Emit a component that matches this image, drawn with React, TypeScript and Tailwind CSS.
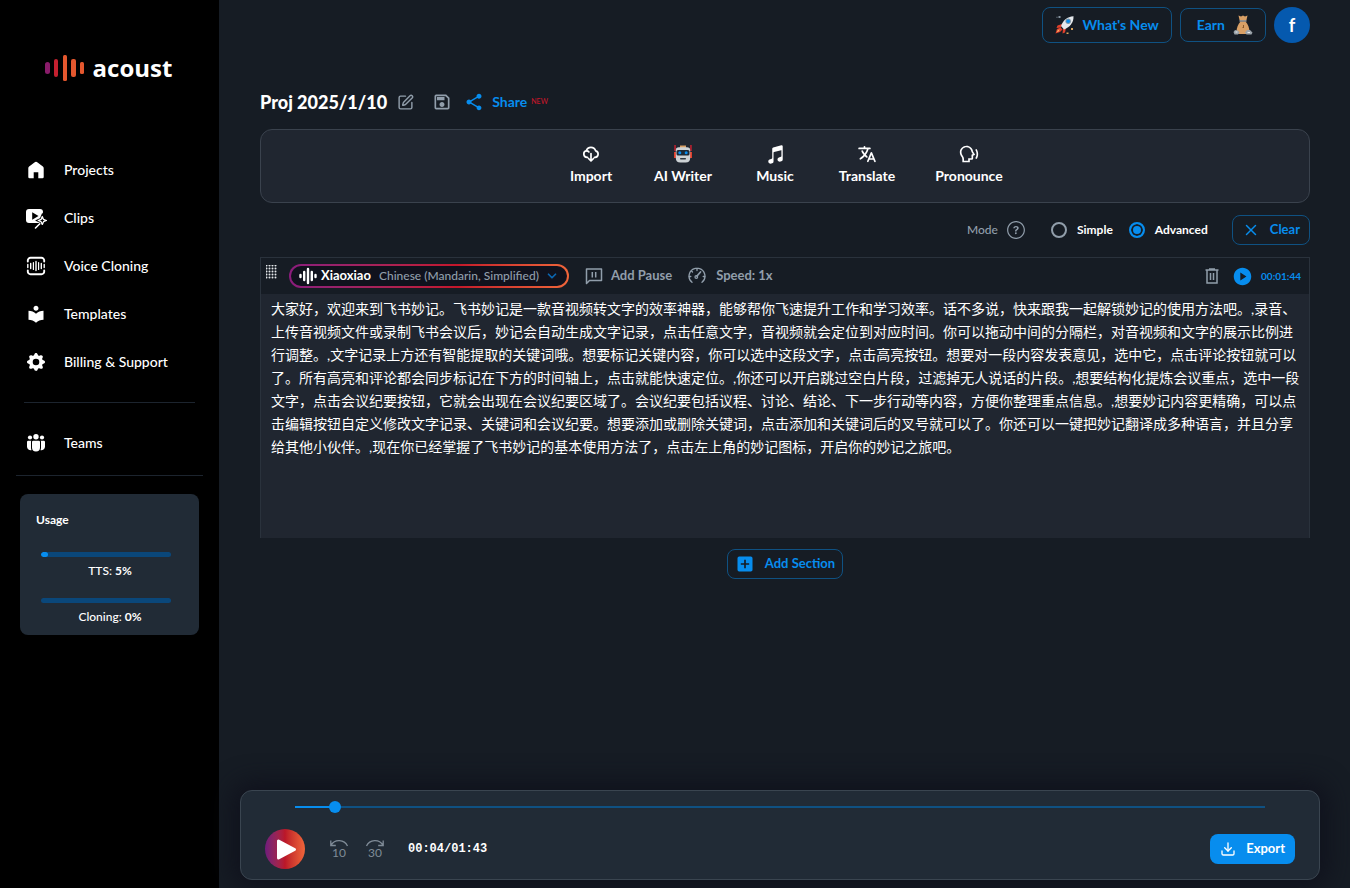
import { useState } from "react";
import type { ReactNode } from "react";
import { ChevronDown, Download, SquarePen, X } from "lucide-react";
import { BsGearFill } from "react-icons/bs";
import { IoIosHelpCircleOutline } from "react-icons/io";
import { IoLanguage, IoMusicalNotes } from "react-icons/io5";
import { MdAddBox, MdLocalLibrary, MdOutlineSave, MdPlayCircle, MdShare } from "react-icons/md";
import { RiSpeakLine } from "react-icons/ri";

const SCRIPT =
  "大家好，欢迎来到飞书妙记。飞书妙记是一款音视频转文字的效率神器，能够帮你飞速提升工作和学习效率。话不多说，快来跟我一起解锁妙记的使用方法吧。,录音、上传音视频文件或录制飞书会议后，妙记会自动生成文字记录，点击任意文字，音视频就会定位到对应时间。你可以拖动中间的分隔栏，对音视频和文字的展示比例进行调整。,文字记录上方还有智能提取的关键词哦。想要标记关键内容，你可以选中这段文字，点击高亮按钮。想要对一段内容发表意见，选中它，点击评论按钮就可以了。所有高亮和评论都会同步标记在下方的时间轴上，点击就能快速定位。,你还可以开启跳过空白片段，过滤掉无人说话的片段。,想要结构化提炼会议重点，选中一段文字，点击会议纪要按钮，它就会出现在会议纪要区域了。会议纪要包括议程、讨论、结论、下一步行动等内容，方便你整理重点信息。,想要妙记内容更精确，可以点击编辑按钮自定义修改文字记录、关键词和会议纪要。想要添加或删除关键词，点击添加和关键词后的叉号就可以了。你还可以一键把妙记翻译成多种语言，并且分享给其他小伙伴。,现在你已经掌握了飞书妙记的基本使用方法了，点击左上角的妙记图标，开启你的妙记之旅吧。";

/* ---------- icons ---------- */

function LogoMark() {
  return (
    <svg width="40" height="28" viewBox="0 0 40 28" aria-hidden="true">
      <rect x="0" y="8" width="5" height="12" rx="2.5" fill="#8a1c6a" />
      <rect x="9" y="5" width="4" height="18" rx="2" fill="#c4202f" />
      <rect x="18" y="1" width="4" height="26" rx="1.5" fill="#e4572e" />
      <rect x="26" y="5" width="5" height="18" rx="2" fill="#e4572e" />
      <rect x="35" y="8" width="4" height="12" rx="1.5" fill="#e4572e" />
    </svg>
  );
}

function HomeIcon() {
  return (
    <svg width="24" height="24" viewBox="0 0 24 24" fill="currentColor" aria-hidden="true">
      <path d="M11.1 4.1a1.5 1.5 0 0 1 1.8 0l6 4.5a2 2 0 0 1 .8 1.6V19a1.3 1.3 0 0 1-1.3 1.3h-4.1v-6.1H9.7v6.1H5.6A1.3 1.3 0 0 1 4.3 19v-8.8a2 2 0 0 1 .8-1.6z" />
    </svg>
  );
}

function ClipsIcon() {
  return (
    <svg width="24" height="24" viewBox="0 0 24 24" aria-hidden="true">
      <rect x="2" y="3" width="17" height="14" rx="3" fill="currentColor" />
      <path d="M8.2 6.2v7.6l6.3-3.8z" fill="#000" />
      <path
        d="M18.3 9.2l1.4 3.6 3.3 1.7-3.3 1.5-1.4 3.3-1.5-3.3-3.4-1.5 3.4-1.7z"
        fill="#000"
        stroke="#000"
        strokeWidth="2"
      />
      <path
        d="M18.3 10.5l1.2 2.9 2.9 1.1-2.9 1.2-1.2 2.7-1.2-2.7-2.9-1.2 2.9-1.1z"
        fill="#000"
        stroke="currentColor"
        strokeWidth="1.3"
        strokeLinejoin="round"
      />
      <path d="M15.8 17.8 11.5 22" stroke="currentColor" strokeWidth="1.6" strokeLinecap="round" />
    </svg>
  );
}

function VoiceCloneIcon() {
  return (
    <svg
      width="24"
      height="24"
      viewBox="0 0 24 24"
      fill="none"
      stroke="currentColor"
      strokeWidth="1.9"
      strokeLinecap="round"
      aria-hidden="true"
    >
      <path d="M3.8 7.5v-1a2.7 2.7 0 0 1 2.7-2.7h11a2.7 2.7 0 0 1 2.7 2.7v1M20.2 16.5v1a2.7 2.7 0 0 1-2.7 2.7h-11a2.7 2.7 0 0 1-2.7-2.7v-1" />
      <path d="M3.8 10.5v3M6.7 9.5v5M12 7.5v9M17.3 9.5v5M20.2 10.5v3" strokeWidth="1.4" />
      <path d="M9.4 8.5v7M14.6 8.5v7" strokeWidth="1.2" />
    </svg>
  );
}

function TeamsIcon() {
  return (
    <svg width="24" height="24" viewBox="0 0 24 24" fill="currentColor" aria-hidden="true">
      <circle cx="12" cy="5.7" r="2.7" />
      <circle cx="6" cy="6.5" r="2.1" />
      <circle cx="18" cy="6.5" r="2.1" />
      <path d="M8 11a1.2 1.2 0 0 1 1.2-1.2h5.6A1.2 1.2 0 0 1 16 11v5.6a4 4 0 0 1-8 0z" />
      <path d="M7.4 9.8H4.2A1.2 1.2 0 0 0 3 11v4.8a3.6 3.6 0 0 0 4.5 3.4 6 6 0 0 1-.5-2.6V11c0-.5.1-.9.4-1.2zM16.6 9.8h3.2A1.2 1.2 0 0 1 21 11v4.8a3.6 3.6 0 0 1-4.5 3.4 6 6 0 0 0 .5-2.6V11c0-.5-.1-.9-.4-1.2z" />
    </svg>
  );
}

function RocketIcon() {
  return (
    <svg width="20" height="20" viewBox="0 0 20 20" aria-hidden="true">
      <path d="M7 9 2.5 10.5 1.5 13 6 12.5zM11 13l-1 4.5-2.5 1 .5-4.5z" fill="#e0402c" />
      <path d="M6 11C8 5.5 12 1.5 18.5 1.2 18.8 7.5 15 12 9 14.5z" fill="#e4e8ec" />
      <circle cx="13.2" cy="6.3" r="2.7" fill="#7d93a5" />
      <circle cx="13.2" cy="6.3" r="1.8" fill="#078dee" />
      <path d="M5.5 12.5 2 14 .5 18.5 5 17l2.500-2.500z" fill="#e0402c" />
      <path d="M4.5 14 2.5 15.5l-.7 1.8L4 16.3z" fill="#f5b36b" />
      <path d="M3.5 1h2v2h-2zM1.500 1.8h1v1h-1z" fill="#8795a1" />
      <path d="M16 13h2v2h-2zM11.5 17.5h2V19h-2z" fill="#d8a25c" />
    </svg>
  );
}

function MoneyBagIcon() {
  return (
    <svg width="20" height="20" viewBox="0 0 20 20" aria-hidden="true">
      <path d="M5.5.5 8 1.5l2-1 2 1 2.5-1-1 4.5h-7z" fill="#d9a066" />
      <path d="M7.5 6.5h5c2.5 3 4 6.500 4 10 0 1.500-1 2.500-2.500 2.500H6c-1.500 0-2.500-1-2.500-2.500 0-3.500 1.500-7 4-10z" fill="#d9a066" />
      <path d="M6.5 5h7v1.8h-7z" fill="#8f8f8f" />
      <path d="M10.5 10v2M9.5 12.5H11" stroke="#8a5a2b" />
      <path d="M.5 17 2 15l3 .5 1.5 2-1.5 2H1.500zM12 17.5l2-2.5h3l2.5 2.500-1 2h-5z" fill="#9ba3aa" />
      <path d="M2.5 17h2M14.5 17.5H17" stroke="#e8ecef" />
    </svg>
  );
}

function RobotIcon() {
  return (
    <svg width="18" height="18" viewBox="0 0 18 18" aria-hidden="true">
      <path d="M.3 0h1.5v6H.3zM16.2 0h1.5v6h-1.5z" fill="#c4202f" />
      <path d="M0 7h2.5v6H0zM15.5 7H18v6h-2.5z" fill="#e0402c" />
      <path d="M6 .5h6V3H6z" fill="#d9a066" />
      <path d="M5 2.2h8a3.2 3.2 0 0 1 3.2 3.3V13c0 3-1.7 4.5-4.5 4.5H6.300c-2.800 0-4.500-1.500-4.500-4.500V5.500A3.200 3.200 0 0 1 5 2.200z" fill="#cdd2d5" />
      <rect x="2.5" y="5" width="13" height="5.5" rx="1.5" fill="#1d2a36" />
      <circle cx="5.8" cy="7.7" r="1.5" fill="#078dee" />
      <circle cx="12.2" cy="7.7" r="1.5" fill="#078dee" />
      <rect x="6" y="13" width="6" height="1.5" rx=".7" fill="#2e3942" />
    </svg>
  );
}

function CloudImportIcon() {
  return (
    <svg
      width="18"
      height="18"
      viewBox="0 0 18 18"
      fill="none"
      stroke="currentColor"
      strokeWidth="1.7"
      strokeLinecap="round"
      strokeLinejoin="round"
      aria-hidden="true"
    >
      <path d="M5.5 12.3H5A3.3 3.3 0 0 1 4.3 5.8a4.9 4.9 0 0 1 9.3 0 3.3 3.3 0 0 1-.6 6.5h-.5" />
      <path d="M4.5 5.8c1 0 1.9.4 2.4 1.1M9 8.5v7.3M6.5 13.5 9 16l2.5-2.5" />
    </svg>
  );
}

function WaveIcon() {
  return (
    <svg
      width="18"
      height="18"
      viewBox="0 0 18 18"
      stroke="currentColor"
      strokeWidth="2.4"
      strokeLinecap="round"
      aria-hidden="true"
    >
      <path d="M1.5 8v2M5.2 5v8M9 2v14M12.8 5v8M16.5 8v2" />
    </svg>
  );
}

function PauseCommentIcon() {
  return (
    <svg
      width="18"
      height="18"
      viewBox="0 0 18 18"
      fill="none"
      stroke="currentColor"
      strokeWidth="1.5"
      aria-hidden="true"
    >
      <path d="M1.5 16.5V2h15v11.5h-12z" strokeLinejoin="round" />
      <path d="M7.3 5v5.5M10.7 5v5.5" />
    </svg>
  );
}

function SpeedIcon() {
  return (
    <svg
      width="18"
      height="18"
      viewBox="0 0 18 18"
      fill="none"
      stroke="currentColor"
      strokeWidth="1.3"
      strokeLinecap="round"
      aria-hidden="true"
    >
      <path d="M4 15.300A8 8 0 0 1 7.300 1.300h3.400A8 8 0 0 1 14 15.300" />
      <path d="M9 1.500v2M3.500 4l1 1M1.300 9.500h1.500M15.200 9.500h1.500" />
      <path d="M9 9 12.500 5" strokeWidth="1.8" />
      <circle cx="8.300" cy="10" r="1.300" />
    </svg>
  );
}

function TrashIcon() {
  return (
    <svg
      width="16"
      height="18"
      viewBox="0 0 16 18"
      fill="none"
      stroke="currentColor"
      strokeWidth="1.5"
      aria-hidden="true"
    >
      <path d="M1.5 3h13M5 2h6M3 3v13h10V3M6.5 6v7M9.5 6v7" />
    </svg>
  );
}

function DragDots() {
  const rows = [1, 4, 7, 10, 13];
  const cols = [1, 4, 7, 10];
  return (
    <svg width="11" height="14" viewBox="0 0 11 14" fill="#e5e8eb" aria-hidden="true">
      {rows.map((y) => cols.map((x) => <circle key={`${x}-${y}`} cx={x - 0.5} cy={y - 0.5} r="1" />))}
    </svg>
  );
}

function SkipIcon({ seconds, forward }: { seconds: number; forward?: boolean }) {
  return (
    <svg
      width="20"
      height="20"
      viewBox="0 0 20 20"
      fill="none"
      stroke="currentColor"
      strokeWidth="1.3"
      aria-hidden="true"
    >
      {forward ? (
        <path d="M1.5 7A9.3 9.3 0 0 1 18 6.200M18.200 1.500v5h-5" />
      ) : (
        <path d="M18.500 7A9.300 9.300 0 0 0 2 6.200M1.800 1.500v5h5" />
      )}
      <text x="10" y="18" textAnchor="middle" fontSize="12" fill="currentColor" stroke="none">
        {seconds}
      </text>
    </svg>
  );
}

/* ---------- sidebar ---------- */

function NavItem({ icon, label }: { icon: ReactNode; label: string }) {
  return (
    <a href="#" className="flex h-12 items-center gap-4 px-6 text-sm font-medium text-white">
      <span className="flex w-6 justify-center">{icon}</span>
      {label}
    </a>
  );
}

function UsageBar({ label, value }: { label: string; value: number }) {
  return (
    <div>
      <div
        role="progressbar"
        aria-label={label}
        aria-valuenow={value}
        className="h-[5px] overflow-hidden rounded-sm bg-[#0a477a]"
      >
        <div className="h-full rounded-sm bg-[#078dee]" style={{ width: `${value}%` }} />
      </div>
      <p className="mt-1 pl-2 text-center text-xs leading-5 font-medium">
        {label}: <b>{value}%</b>
      </p>
    </div>
  );
}

function Sidebar() {
  return (
    <aside className="w-[219px] shrink-0 bg-black text-white">
      <a href="#" className="mt-[54px] flex h-7 items-center justify-center gap-2 pr-0.5">
        <LogoMark />
        <span className="font-['Open_Sans',sans-serif] text-2xl leading-7 font-bold">acoust</span>
      </a>
      <nav className="mt-16">
        <NavItem icon={<HomeIcon />} label="Projects" />
        <NavItem icon={<ClipsIcon />} label="Clips" />
        <NavItem icon={<VoiceCloneIcon />} label="Voice Cloning" />
        <NavItem icon={<MdLocalLibrary size={20} />} label="Templates" />
        <NavItem icon={<BsGearFill size={18} />} label="Billing & Support" />
        <hr className="mx-6 my-4 border-[#1c242e]" />
        <NavItem icon={<TeamsIcon />} label="Teams" />
      </nav>
      <hr className="mx-4 mt-2 border-[#1c242e]" />
      <section className="mx-5 mt-[18px] rounded-lg bg-[#212b36] px-4 pt-4 pb-2">
        <h2 className="text-xs leading-5 font-bold">Usage</h2>
        <div className="mt-[22px] mr-3 ml-[5px] flex flex-col gap-[17px]">
          <UsageBar label="TTS" value={5} />
          <UsageBar label="Cloning" value={0} />
        </div>
      </section>
    </aside>
  );
}

/* ---------- main area ---------- */

function TopBar() {
  return (
    <header className="flex items-center justify-end gap-2 text-sm font-bold text-[#078dee]">
      <button className="flex h-9 items-center gap-2 rounded-lg border border-[#0f5182] px-3">
        <RocketIcon />
        What's New
      </button>
      <button className="flex h-[34px] items-center gap-2 rounded-lg border border-[#0f5182] pr-3 pl-4">
        Earn
        <MoneyBagIcon />
      </button>
      <button aria-label="Account" className="h-9 w-9 rounded-full bg-[#0559ae] text-lg text-white">
        f
      </button>
    </header>
  );
}

function ToolButton({ icon, label, wide }: { icon: ReactNode; label: string; wide?: boolean }) {
  return (
    <button className={`flex flex-col items-center gap-0.5 ${wide ? "w-28" : "w-[92px]"}`}>
      <span className="flex h-5 items-center">{icon}</span>
      {label}
    </button>
  );
}

function ModeRadio({ label, checked, onChange }: { label: string; checked: boolean; onChange: () => void }) {
  return (
    <label className="flex items-center gap-2.5 text-xs font-bold text-white">
      <input
        type="radio"
        name="mode"
        checked={checked}
        onChange={onChange}
        className="h-4 w-4 appearance-none rounded-full border-2 border-[#919eab] checked:border-[#078dee] checked:bg-[#078dee] checked:shadow-[inset_0_0_0_2px_#161c24]"
      />
      {label}
    </label>
  );
}

function ScriptSection() {
  const [text, setText] = useState(SCRIPT);

  return (
    <section className="border border-b-0 border-[#2a323c]">
      <div className="flex h-9 items-center pr-2 pl-[5px] text-[13px] font-bold text-[#919eab]">
        <button aria-label="Move section" className="-mt-2">
          <DragDots />
        </button>
        <button className="ml-3 rounded-full bg-linear-to-r from-[#8a1c7c] via-[#c4162a] via-60% to-[#f0653a] p-0.5">
          <span className="flex h-5 items-center rounded-full bg-[#10121d] px-2">
            <span className="text-white">
              <WaveIcon />
            </span>
            <span className="ml-1 text-white">Xiaoxiao</span>
            <span className="ml-2 text-xs font-medium">Chinese (Mandarin, Simplified)</span>
            <ChevronDown size={14} strokeWidth={3} className="ml-1.5 text-[#0b66b0]" />
          </span>
        </button>
        <button className="ml-4 flex items-center gap-2">
          <PauseCommentIcon />
          Add Pause
        </button>
        <button className="ml-4 flex items-center gap-2.5">
          <SpeedIcon />
          Speed: 1x
        </button>
        <button aria-label="Delete section" className="ml-auto">
          <TrashIcon />
        </button>
        <button className="ml-3 flex items-center gap-2 text-[10px] text-[#078dee]">
          <MdPlayCircle size={21} />
          00:01:44
        </button>
      </div>
      <textarea
        aria-label="Script"
        value={text}
        onChange={(e) => setText(e.target.value)}
        spellCheck={false}
        className="block h-[244px] w-full resize-none bg-[#202630] py-[3px] pr-1.5 pl-2.5 font-[Lato,'Noto_Sans_CJK_SC',sans-serif] text-sm leading-[23px] text-white outline-none"
      />
    </section>
  );
}

function Player() {
  const duration = 103;
  const [time, setTime] = useState(3.7);
  const played = (time / duration) * 100;

  return (
    <footer className="mt-auto mr-[30px] mb-2 ml-[21px] rounded-xl border border-[#3a4550] bg-[#212b36] px-6 py-2.5 shadow-[0_0_24px_8px_#10121d]">
      <input
        type="range"
        aria-label="Position"
        min={0}
        max={duration}
        step="any"
        value={time}
        onChange={(e) => setTime(Number(e.target.value))}
        style={{ backgroundImage: `linear-gradient(to right, #078dee ${played}%, #0f5182 ${played}%)` }}
        className="mx-[30px] block h-3 w-[calc(100%-60px)] appearance-none bg-[length:100%_2px] bg-center bg-no-repeat [&::-webkit-slider-thumb]:h-3 [&::-webkit-slider-thumb]:w-3 [&::-webkit-slider-thumb]:appearance-none [&::-webkit-slider-thumb]:rounded-full [&::-webkit-slider-thumb]:bg-[#078dee]"
      />
      <div className="mt-4 flex items-center text-[#7f8b97]">
        <button
          aria-label="Play"
          className="flex h-10 w-10 items-center justify-center rounded-full bg-linear-to-r from-[#6f1a7c] via-[#bb1628] to-[#f0653a]"
        >
          <svg width="40" height="40" viewBox="0 0 40 40" aria-hidden="true">
            <path d="M13.5 12v17l16-8.5z" fill="#fff" stroke="#fff" strokeWidth="3" strokeLinejoin="round" />
          </svg>
        </button>
        <button aria-label="Back 10 seconds" className="ml-6">
          <SkipIcon seconds={10} />
        </button>
        <button aria-label="Forward 30 seconds" className="ml-4">
          <SkipIcon seconds={30} forward />
        </button>
        <span className="ml-[23px] font-['Liberation_Mono',monospace] text-xs font-bold text-white">00:04/01:43</span>
        <button className="ml-auto flex h-[30px] items-center gap-2.5 rounded-lg bg-[#078dee] px-2.5 text-[13px] font-bold text-white">
          <Download size={16} />
          Export
        </button>
      </div>
    </footer>
  );
}

export default function App() {
  const [mode, setMode] = useState("advanced");

  return (
    <div className="flex min-h-screen bg-[#161c24] font-[Lato,sans-serif]">
      <Sidebar />
      <main className="flex min-w-0 flex-1 flex-col">
        <div className="pt-[7px] pr-10 pl-[41px]">
          <TopBar />

          <div className="mt-11 flex h-[30px] items-center text-[#919eab]">
            <h1 className="text-lg font-black text-white">Proj 2025/1/10</h1>
            <button aria-label="Rename" className="ml-2.5">
              <SquarePen size={17} />
            </button>
            <button aria-label="Save" className="ml-[18px]">
              <MdOutlineSave size={20} />
            </button>
            <button className="ml-3 flex items-center gap-2 text-sm font-bold text-[#078dee]">
              <MdShare size={20} />
              <span>
                Share
                <sup className="ml-1 text-[7px] font-medium text-[#c4162a]">NEW</sup>
              </span>
            </button>
          </div>

          <div className="mt-3 flex justify-center rounded-xl border border-[#3a424d] bg-[#202630] pt-3.5 pb-4 text-sm leading-5 font-bold text-white">
            <ToolButton icon={<CloudImportIcon />} label="Import" />
            <ToolButton icon={<RobotIcon />} label="AI Writer" />
            <ToolButton icon={<IoMusicalNotes size={21} />} label="Music" />
            <ToolButton icon={<IoLanguage size={20} />} label="Translate" />
            <ToolButton icon={<RiSpeakLine size={20} />} label="Pronounce" wide />
          </div>

          <div className="my-3 flex items-center justify-end">
            <span className="text-xs font-medium text-[#919eab]">Mode</span>
            <IoIosHelpCircleOutline size={22} className="mr-6 ml-[7px] text-[#919eab]" />
            <fieldset className="flex gap-4">
              <ModeRadio label="Simple" checked={mode === "simple"} onChange={() => setMode("simple")} />
              <ModeRadio label="Advanced" checked={mode === "advanced"} onChange={() => setMode("advanced")} />
            </fieldset>
            <button className="ml-6 flex h-[30px] items-center gap-2.5 rounded-lg border border-[#0f5182] px-[9px] text-[13px] font-bold text-[#078dee]">
              <X size={18} />
              Clear
            </button>
          </div>

          <ScriptSection />

          <button className="mx-auto mt-[11px] flex h-[30px] items-center gap-2.5 rounded-lg border border-[#0f5182] px-[7px] text-[13px] font-bold text-[#078dee]">
            <MdAddBox size={20} />
            Add Section
          </button>
        </div>

        <Player />
      </main>
    </div>
  );
}
